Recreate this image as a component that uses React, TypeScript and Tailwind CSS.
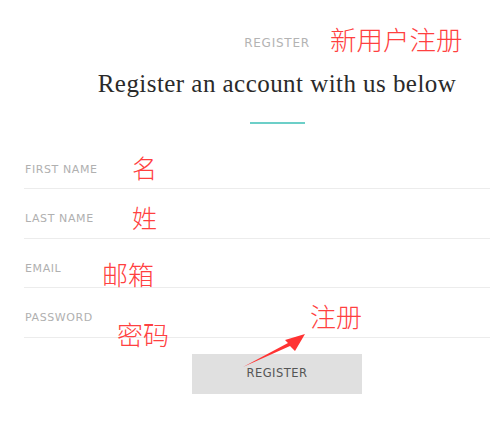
import React from 'react'

const fields = ['FIRST NAME', 'LAST NAME', 'EMAIL', 'PASSWORD']

// red hand-written notes laid over the form
const notes = [
  { text: '新用户注册', className: 'left-[330px] top-[26px] text-[26.5px]' },
  { text: '名', className: 'left-[132px] top-[155px] text-[25px]' },
  { text: '姓', className: 'left-[132px] top-[205px] text-[25px]' },
  { text: '邮箱', className: 'left-[102px] top-[261px] text-[26px]' },
  { text: '密码', className: 'left-[117px] top-[321px] text-[26px]' },
  { text: '注册', className: 'left-[310px] top-[303px] text-[26px]' },
]

export default function App() {
  return (
    <div className="relative h-[439px] w-[490px] overflow-hidden bg-white font-['DejaVu_Sans',sans-serif]">
      <div className="flex flex-col items-center pl-16 pt-[35px]">
        <div className="text-[12px] leading-4 tracking-[0.75px] text-[#b3b3b3]">
          REGISTER
        </div>
        <h1 className="mt-[18px] font-['Liberation_Serif',serif] text-[25px] leading-[30px] tracking-[0.45px] text-[#2a2a2a]">
          Register an account with us below
        </h1>
        <div className="mt-[23px] h-[2px] w-[55px] bg-[#6ccfc8]" />
      </div>

      <form className="mt-[15.5px] pl-6">
        {fields.map((label) => (
          <div
            key={label}
            className="h-[49.5px] border-b border-[#ececec] pl-px pt-[22px]"
          >
            <span className="block text-[11px] leading-4 tracking-[0.6px] text-[#b0b0b0]">
              {label}
            </span>
          </div>
        ))}
      </form>

      <div className="mt-4 flex justify-center pl-16">
        <button
          type="button"
          className="h-10 w-[170px] bg-[#e0e0e0] text-[11.5px] tracking-[0.5px] text-[#555]"
        >
          REGISTER
        </button>
      </div>

      {notes.map((n) => (
        <span
          key={n.text}
          className={`absolute font-['Noto_Sans_CJK_SC',sans-serif] font-light leading-none text-[#ff4040] ${n.className}`}
        >
          {n.text}
        </span>
      ))}

      <svg
        className="absolute left-0 top-0"
        width="490"
        height="439"
        viewBox="0 0 490 439"
      >
        <path
          d="M243 367 L290 346 L295 351 L305 334 L285 340 L288 343 Z"
          fill="#f33"
        />
      </svg>
    </div>
  )
}
